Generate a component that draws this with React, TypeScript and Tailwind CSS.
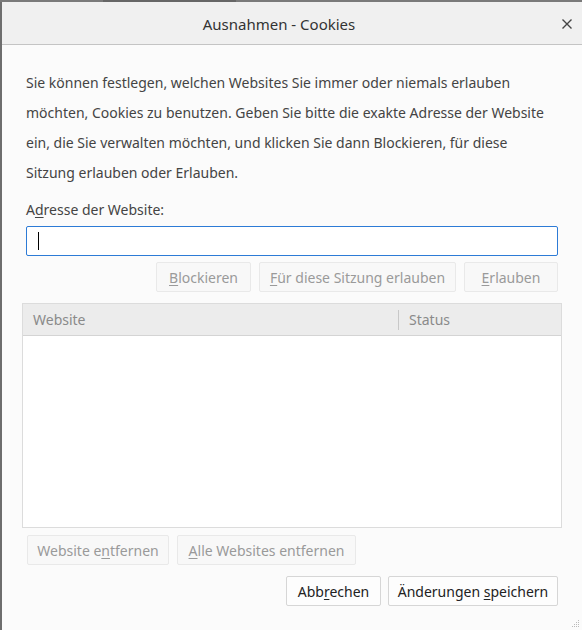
import React from "react";

function U({ children }: { children: React.ReactNode }) {
  return <span className="underline underline-offset-2">{children}</span>;
}

export default function App() {
  const font = { fontFamily: '"Noto Sans", "Open Sans", sans-serif' };
  return (
    <div className="w-[582px] h-[630px] bg-[#777] flex flex-col overflow-hidden" style={font}>
      <div className="h-[2px] flex shrink-0">
        <div className="w-[103px] bg-[#7a7a7a]" />
        <div className="w-[133px] bg-[#666]" />
        <div className="flex-1 bg-[#7a7a7a]" />
      </div>
      <div className="flex-1 flex flex-col border-l-2 border-[#6e6e6e] bg-[#fbfbfb] relative">
        <div className="h-[43px] bg-[#f0f0f0] border-b border-[#c4c4c4] flex items-center justify-center relative shrink-0 pr-[26px] pt-[2px]">
          <span className="text-[15px] text-[#333]">Ausnahmen - Cookies</span>
          <span className="absolute right-[10px] top-[17px] flex">
            <svg width="10" height="10" viewBox="0 0 10 10">
              <path d="M0.5 0.5 L9.5 9.5 M9.5 0.5 L0.5 9.5" stroke="#444" strokeWidth="1.4" />
            </svg>
          </span>
        </div>
        <div className="flex flex-col pl-[24px] pr-[24px]">
          <p className="mt-[23px] w-[524px] text-[14px] leading-[30px] text-[#444]">
            Sie können festlegen, welchen Websites Sie immer oder niemals erlauben möchten, Cookies zu benutzen. Geben Sie bitte die exakte Adresse der Website ein, die Sie verwalten möchten, und klicken Sie dann Blockieren, für diese Sitzung erlauben oder Erlauben.
          </p>
          <div className="mt-[12px] text-[14px] leading-[20px] text-[#444]">
            A<U>d</U>resse der Website:
          </div>
          <div className="mt-[6px] h-[30px] bg-white border border-[#2d7bd6] rounded-[2px] flex items-center pl-[11px]">
            <div className="w-px h-[18px] bg-black" />
          </div>
          <div className="mt-[6px] flex justify-end gap-[8px]">
            <button className="h-[30px] w-[95px] whitespace-nowrap border border-[#e9e9e9] bg-[#f8f8f8] rounded-[2px] text-[14px] text-[#9a9a9a]">
              <U>B</U>lockieren
            </button>
            <button className="h-[30px] w-[197px] whitespace-nowrap border border-[#e9e9e9] bg-[#f8f8f8] rounded-[2px] text-[14px] text-[#9a9a9a]">
              <U>F</U>ür diese Sitzung erlauben
            </button>
            <button className="h-[30px] w-[94px] whitespace-nowrap border border-[#e9e9e9] bg-[#f8f8f8] rounded-[2px] text-[14px] text-[#9a9a9a]">
              <U>E</U>rlauben
            </button>
          </div>
        </div>
        <div className="mt-[11px] ml-[20px] w-[540px] h-[225px] border border-[#dcdcdc] bg-white flex flex-col">
          <div className="h-[32px] bg-[#ececec] border-b border-[#d4d4d4] flex items-center text-[14px] text-[#8a8a8a]">
            <div className="w-[376px] pl-[10px] border-r border-[#c8c8c8] h-[20px] flex items-center">Website</div>
            <div className="pl-[10px]">Status</div>
          </div>
          <div className="flex-1" />
        </div>
        <div className="mt-[7px] pl-[25px] flex gap-[8px]">
          <button className="h-[30px] w-[142px] whitespace-nowrap border border-[#e9e9e9] bg-[#f8f8f8] rounded-[2px] text-[14px] text-[#9a9a9a]">
            Website e<U>n</U>tfernen
          </button>
          <button className="h-[30px] w-[179px] whitespace-nowrap border border-[#e9e9e9] bg-[#f8f8f8] rounded-[2px] text-[14px] text-[#9a9a9a]">
            <U>A</U>lle Websites entfernen
          </button>
        </div>
        <div className="mt-[11px] pr-[24px] flex justify-end gap-[7px]">
          <button className="h-[30px] w-[95px] whitespace-nowrap border border-[#d6d6d6] bg-[#fdfdfd] rounded-[2px] text-[14px] text-[#222]">
            Abb<U>r</U>echen
          </button>
          <button className="h-[30px] w-[170px] whitespace-nowrap border border-[#d6d6d6] bg-[#fdfdfd] rounded-[2px] text-[14px] text-[#222]">
            Änderungen <U>s</U>peichern
          </button>
        </div>
        <div className="absolute right-[2px] bottom-[2px] flex">
          <svg width="10" height="10" viewBox="0 0 10 10">
            <rect x="8" y="2" width="1" height="1" fill="#bbb" />
            <rect x="6" y="4" width="1" height="1" fill="#bbb" />
            <rect x="8" y="4" width="1" height="1" fill="#bbb" />
            <rect x="4" y="6" width="1" height="1" fill="#bbb" />
            <rect x="6" y="6" width="1" height="1" fill="#bbb" />
            <rect x="8" y="6" width="1" height="1" fill="#bbb" />
            <rect x="2" y="8" width="1" height="1" fill="#bbb" />
            <rect x="4" y="8" width="1" height="1" fill="#bbb" />
            <rect x="6" y="8" width="1" height="1" fill="#bbb" />
            <rect x="8" y="8" width="1" height="1" fill="#bbb" />
          </svg>
        </div>
      </div>
    </div>
  );
}
